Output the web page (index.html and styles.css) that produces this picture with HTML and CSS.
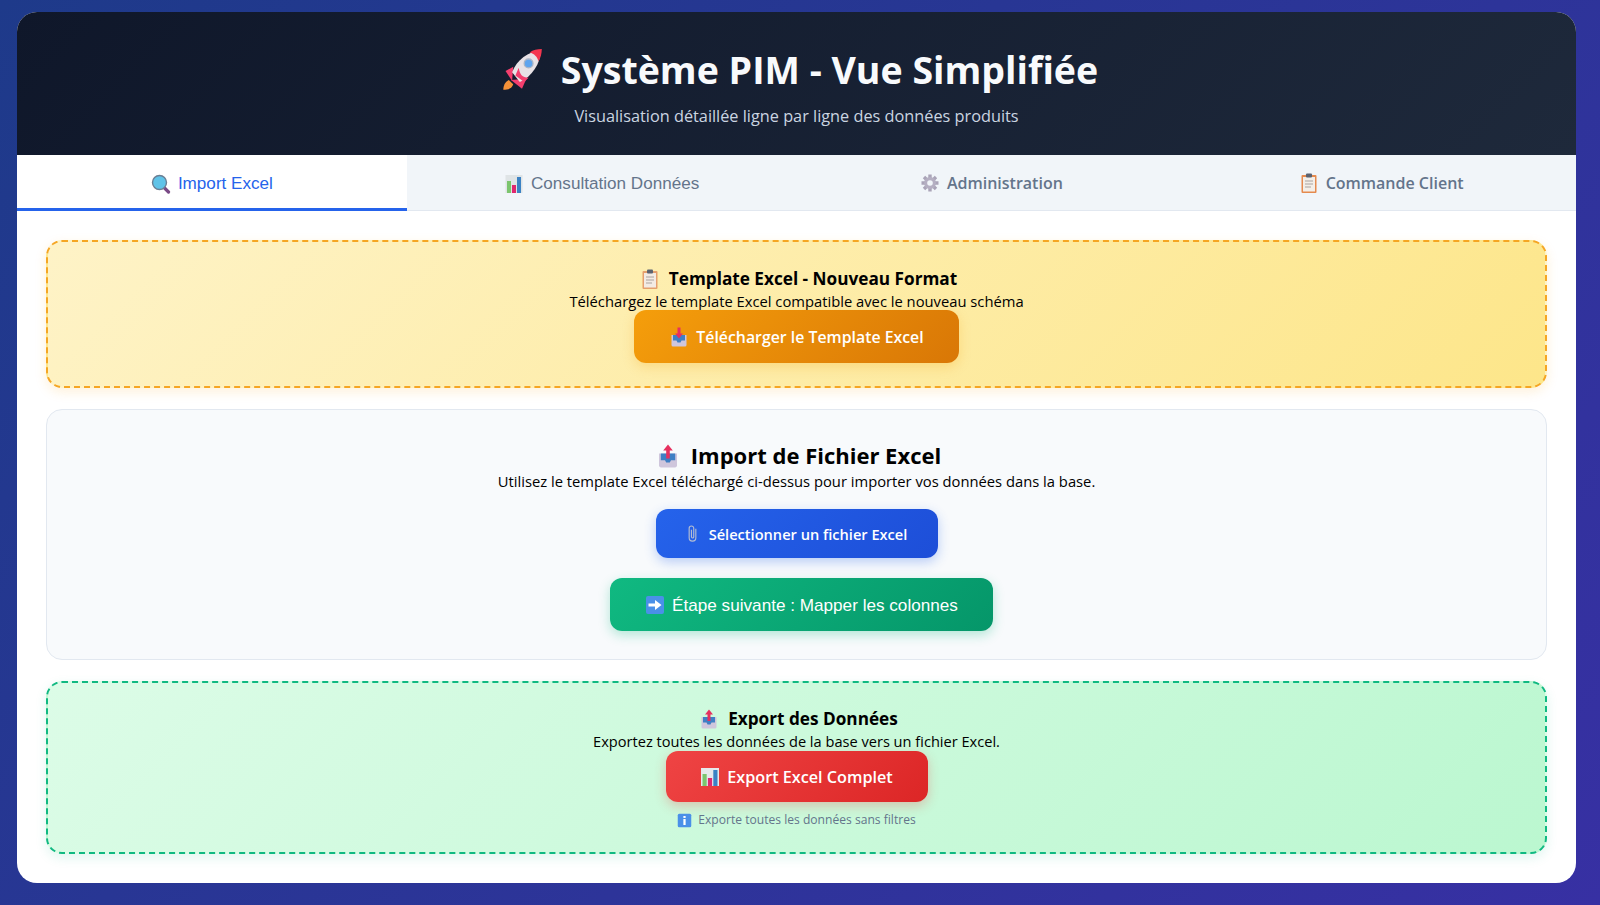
FILE: index.html
```html
<!DOCTYPE html>
<html lang="fr">

<head>
  <meta charset="UTF-8">
  <title>Système PIM - Vue Simplifiée</title>
  <link rel="stylesheet" href="styles.css">
</head>

<body>
  <div class="container">
    <header class="header">
      <h1 class="title">
        <svg class="icon-rocket" viewBox="0 0 40 40"><path d="M8 29 C4 31 3 35 3 38 C7 38 11 37 12 33 Z" fill="#f59138"/><path d="M12 17 L5 21 L11 30 Z" fill="#f43f6e"/><path d="M24 28 L20 37 L10 29 Z" fill="#f43f6e"/><path d="M37 2 C26 3 15 11 11 22 L18 31 C29 26 37 14 37 2 Z" fill="#e8e2e6"/><path d="M38 1 C34 1 30 2 27 4 C31 5 34 8 35 12 C37 9 38 5 38 1 Z" fill="#f4364f"/><path d="M22 31 L14 25 L17 18 C18 24 20 27 26 27 Z" fill="#f43f6e"/><circle cx="26" cy="14" r="4" fill="#5fa4ee" stroke="#a9b4c6" stroke-width="1.2"/></svg>
        Système PIM - Vue Simplifiée
      </h1>
      <p class="subtitle">Visualisation détaillée ligne par ligne des données produits</p>
    </header>

    <nav class="tabs">
      <div class="tab active">
        <svg class="icon" viewBox="0 0 20 20"><path d="M12.5 13 L17.5 18" stroke="#7a4a86" stroke-width="3.2" stroke-linecap="round"/><circle cx="8.5" cy="8.5" r="7" fill="#5fc3e8" stroke="#6b7f94" stroke-width="1.4"/></svg>
        Import Excel
      </div>
      <div class="tab">
        <svg class="icon" viewBox="0 0 20 20"><rect x="1.5" y="1" width="17" height="18" fill="#dfe4e6"/><rect x="3" y="7" width="4" height="12" fill="#7cc56e"/><rect x="8" y="11" width="4" height="8" fill="#e0286f"/><rect x="13" y="3" width="4" height="16" fill="#3b82c4"/></svg>
        Consultation Données
      </div>
      <div class="tab tab-segoe">
        <svg class="icon" viewBox="0 0 20 20"><path d="M10 1.5 V18.5 M1.5 10 H18.5 M4 4 L16 16 M16 4 L4 16" stroke="#aaa4b8" stroke-width="3.4"/><circle cx="10" cy="10" r="6" fill="#b5afc2"/><circle cx="10" cy="10" r="2.8" fill="#f1f5f9"/></svg>
        Administration
      </div>
      <div class="tab tab-segoe">
        <svg class="icon" viewBox="0 0 20 20"><rect x="2.5" y="2" width="15" height="18" rx="1" fill="#e58a4e"/><rect x="4" y="4" width="12" height="14.5" fill="#f3eee8"/><rect x="7" y="0.5" width="6" height="4" rx="1" fill="#5b6270"/><path d="M6 8 H14 M6 11 H14 M6 14 H12" stroke="#a9a3a0" stroke-width="1"/></svg>
        Commande Client
      </div>
    </nav>

    <main class="content">
      <section class="panel panel-template">
        <h3 class="panel-title">
          <svg class="icon" viewBox="0 0 20 20"><rect x="2.5" y="2" width="15" height="18" rx="1" fill="#e5a06e"/><rect x="4" y="4" width="12" height="14.5" fill="#f3ebe4"/><rect x="7" y="0.5" width="6" height="4" rx="1" fill="#5b6270"/><path d="M6 8 H14 M6 11 H14 M6 14 H12" stroke="#a9a3a0" stroke-width="1"/></svg>
          Template Excel - Nouveau Format
        </h3>
        <p class="panel-text">Téléchargez le template Excel compatible avec le nouveau schéma</p>
        <button class="btn btn-orange" type="button">
          <svg class="icon" viewBox="0 0 20 20"><path d="M2.5 8 H17.5 V18 A1.5 1.5 0 0 1 16 19.5 H4 A1.5 1.5 0 0 1 2.5 18 Z" fill="#cfc6dc"/><path d="M4 8 H16 V13.5 H12.5 L11.5 15.5 H8.5 L7.5 13.5 H4 Z" fill="#3f7fc4"/><path d="M8.5 0.5 H11.5 V6.5 H14 L10 11.5 L6 6.5 H8.5 Z" fill="#e6305f"/></svg>
          Télécharger le Template Excel
        </button>
      </section>

      <section class="panel panel-import">
        <h2 class="import-title">
          <svg class="icon-lg" viewBox="0 0 20 20"><path d="M2.5 8 H17.5 V18 A1.5 1.5 0 0 1 16 19.5 H4 A1.5 1.5 0 0 1 2.5 18 Z" fill="#cfc6dc"/><path d="M4 8 H16 V13.5 H12.5 L11.5 15.5 H8.5 L7.5 13.5 H4 Z" fill="#3f7fc4"/><path d="M8.5 12 H11.5 V5.5 H14 L10 0.5 L6 5.5 H8.5 Z" fill="#e6305f"/></svg>
          Import de Fichier Excel
        </h2>
        <p class="panel-text">Utilisez le template Excel téléchargé ci-dessus pour importer vos données dans la base.</p>
        <button class="btn btn-blue" type="button">
          <svg class="icon-clip" viewBox="0 0 12 20"><path d="M9.5 5 V14.5 A3.5 3.5 0 0 1 2.5 14.5 V4.5 A2.4 2.4 0 0 1 7.3 4.5 V13.5 A1.2 1.2 0 0 1 4.9 13.5 V6" fill="none" stroke="#b4bdd2" stroke-width="1.2"/></svg>
          Sélectionner un fichier Excel
        </button>
        <button class="btn btn-green" type="button">
          <svg class="icon" viewBox="0 0 20 20"><rect x="1" y="1" width="18" height="18" rx="2" fill="#4a90e8"/><path d="M3.5 8.5 H10 V5 L16.5 10 L10 15 V11.5 H3.5 Z" fill="#fff"/></svg>
          Étape suivante : Mapper les colonnes
        </button>
      </section>

      <section class="panel panel-export">
        <h3 class="panel-title">
          <svg class="icon" viewBox="0 0 20 20"><path d="M2.5 8 H17.5 V18 A1.5 1.5 0 0 1 16 19.5 H4 A1.5 1.5 0 0 1 2.5 18 Z" fill="#cfc6dc"/><path d="M4 8 H16 V13.5 H12.5 L11.5 15.5 H8.5 L7.5 13.5 H4 Z" fill="#3f7fc4"/><path d="M8.5 12 H11.5 V5.5 H14 L10 0.5 L6 5.5 H8.5 Z" fill="#e6305f"/></svg>
          Export des Données
        </h3>
        <p class="panel-text">Exportez toutes les données de la base vers un fichier Excel.</p>
        <button class="btn btn-red" type="button">
          <svg class="icon" viewBox="0 0 20 20"><rect x="1" y="1" width="18" height="18" fill="#e6e9ec"/><rect x="2.5" y="7" width="4.2" height="12" fill="#7cc56e"/><rect x="7.9" y="11" width="4.2" height="8" fill="#e0286f"/><rect x="13.3" y="3" width="4.2" height="16" fill="#3b82c4"/></svg>
          Export Excel Complet
        </button>
        <p class="export-note">
          <svg class="icon-note" viewBox="0 0 20 20"><rect x="1" y="1" width="18" height="18" rx="2" fill="#4a90e8"/><rect x="8.5" y="8" width="3" height="8" fill="#fff"/><rect x="8.5" y="4" width="3" height="2.6" fill="#fff"/></svg>
          Exporte toutes les données sans filtres
        </p>
      </section>
    </main>
  </div>
</body>

</html>
```

FILE: styles.css
```css
* {
  box-sizing: border-box;
}

html,
body {
  height: 100%;
}

body {
  margin: 0;
  padding: 12px 24px 22px 17px;
  background: linear-gradient(135deg, #1e3a8a, #3730a3);
  font-family: "Open Sans", "Noto Sans", sans-serif;
  color: #000;
}

.container {
  height: 871px;
  background: #fff;
  border-radius: 20px;
  overflow: hidden;
  display: flex;
  flex-direction: column;
}

.header {
  height: 143px;
  padding-top: 32px;
  background: linear-gradient(135deg, #0f172a, #1e293b);
  text-align: center;
  color: #f8fafc;
}

.title {
  margin: 0;
  padding-left: 5px;
  font-size: 37.5px;
  line-height: 52px;
  font-weight: 700;
  display: flex;
  justify-content: center;
  align-items: center;
  gap: 17px;
}

.icon-rocket {
  width: 44px;
  height: 44px;
}

.subtitle {
  margin: 8px 0 0;
  font-size: 16.3px;
  line-height: 24px;
  color: #cbd5e1;
}

.tabs {
  display: grid;
  grid-template-columns: repeat(4, 1fr);
  height: 56px;
  background: #f1f5f9;
  border-bottom: 1px solid #e2e8f0;
}

.tab {
  display: flex;
  justify-content: center;
  align-items: center;
  gap: 7px;
  padding-top: 4px;
  font-family: "Liberation Sans", Arial, sans-serif;
  font-size: 17.1px;
  color: #64748b;
  border-bottom: 3px solid transparent;
  margin-bottom: -1px;
}

.tab-segoe {
  padding-top: 2px;
  font-family: "Open Sans", "Noto Sans", sans-serif;
  font-size: 16px;
  font-weight: 600;
}

.tab.active {
  background: #fff;
  color: #2563eb;
  border-bottom-color: #2563eb;
}

.icon {
  width: 20px;
  height: 20px;
  flex: none;
}

.icon-lg {
  width: 24px;
  height: 24px;
  flex: none;
}

.icon-clip {
  width: 13px;
  height: 19px;
  flex: none;
}

.icon-note {
  width: 15px;
  height: 15px;
  flex: none;
}

.content {
  flex: 1;
  padding: 29px 29px 0;
  display: flex;
  flex-direction: column;
  gap: 21px;
}

.panel {
  display: flex;
  flex-direction: column;
  align-items: center;
  border-radius: 16px;
  text-align: center;
}

.panel-template {
  height: 148px;
  padding-top: 24px;
  background: linear-gradient(135deg, #fef3c7, #fde68a);
  border: 2px dashed #f5a623;
  box-shadow: 0 4px 12px rgba(245, 158, 11, 0.15);
}

.panel-import {
  height: 251px;
  padding-top: 29px;
  background: #f8fafc;
  border: 1px solid #e2e8f0;
}

.panel-export {
  height: 173px;
  padding-top: 23px;
  background: linear-gradient(135deg, #dcfce7, #bbf7d0);
  border: 2px dashed #10b981;
  box-shadow: 0 4px 12px rgba(16, 185, 129, 0.12);
}

.panel-title {
  margin: 0;
  padding-left: 4px;
  display: flex;
  align-items: center;
  gap: 9px;
  font-size: 17.2px;
  line-height: 26px;
  font-weight: 700;
}

.import-title {
  margin: 0;
  padding-left: 4px;
  display: flex;
  align-items: center;
  gap: 11px;
  font-size: 22px;
  line-height: 33px;
  font-weight: 700;
}

.panel-text {
  margin: 0;
  font-size: 14.75px;
  line-height: 18px;
}

.panel-export .panel-text {
  font-size: 14.6px;
}

.btn {
  display: flex;
  align-items: center;
  justify-content: center;
  gap: 7px;
  border: none;
  border-radius: 12px;
  color: #fff;
  font-family: inherit;
  font-size: 15.85px;
  font-weight: 600;
}

.btn-orange {
  width: 325px;
  height: 53px;
  background: linear-gradient(135deg, #f59e0b, #d97706);
  box-shadow: 0 4px 12px rgba(245, 158, 11, 0.25);
}

.btn-blue {
  width: 282px;
  height: 49px;
  margin-top: 19px;
  gap: 10px;
  font-size: 14.6px;
  background: linear-gradient(135deg, #2563eb, #1d4ed8);
  box-shadow: 0 4px 12px rgba(37, 99, 235, 0.3);
}

.btn-green {
  width: 383px;
  height: 53px;
  margin-top: 20px;
  margin-left: 10px;
  padding-top: 2px;
  background: linear-gradient(135deg, #10b981, #059669);
  box-shadow: 0 4px 12px rgba(16, 185, 129, 0.3);
  font-family: "Liberation Sans", Arial, sans-serif;
  font-size: 17.15px;
  font-weight: 400;
}

.btn-red {
  width: 262px;
  height: 51px;
  margin-top: 1px;
  font-size: 16.2px;
  background: linear-gradient(135deg, #ef4444, #dc2626);
  box-shadow: 0 4px 12px rgba(239, 68, 68, 0.3);
}

.export-note {
  margin: 9px 0 0;
  display: flex;
  align-items: center;
  gap: 6px;
  font-size: 12.1px;
  line-height: 18px;
  color: #64748b;
}
```
